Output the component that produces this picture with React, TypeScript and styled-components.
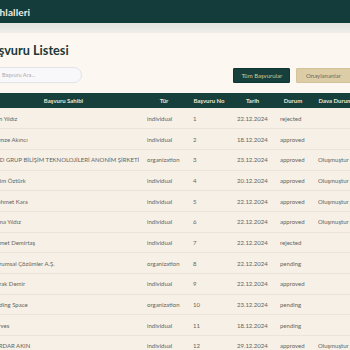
import styled, { createGlobalStyle } from "styled-components";

const GlobalStyle = createGlobalStyle`
  html, body {
    margin: 0;
    padding: 0;
    background: #ecebe7;
    overflow: hidden;
  }
  body {
    font-family: "Lato", "Open Sans", sans-serif;
  }
`;

const Viewport = styled.div`
  width: 350px;
  height: 350px;
  overflow: hidden;
`;

// the page is scrolled a little to the right in the screenshot
const Page = styled.div`
  width: 560px;
  margin-left: -40px;
`;

const TopBar = styled.header`
  height: 23px;
  background: #133c3a;
  display: flex;
  align-items: center;
  padding-left: 15px;
`;

const Brand = styled.h1`
  margin: 0;
  font-size: 10px;
  font-weight: 700;
  color: #f1ede2;
  letter-spacing: 0.1px;
`;

const Band = styled.div`
  height: 10px;
  background: linear-gradient(#e6e4e0, #efeeea);
`;

const Main = styled.main`
  background: #fcf7f0;
  padding: 8px 0 0 25px;
  min-height: 320px;
`;

const Title = styled.h2`
  margin: 0 0 0 -1px;
  height: 18px;
  line-height: 18px;
  font-size: 12.7px;
  font-weight: 700;
  color: #1b3937;
`;

const Toolbar = styled.div`
  display: flex;
  align-items: center;
  justify-content: space-between;
  margin-top: 8px;
  height: 16px;
  width: 428px;
`;

const Search = styled.input`
  box-sizing: border-box;
  width: 97px;
  height: 16px;
  border: 1px solid #e3e3ea;
  border-radius: 8px;
  background: #f8f8fb;
  padding: 0 0 0 16px;
  font-family: inherit;
  font-size: 5.5px;
  color: #555;
  outline: none;
  &::placeholder {
    color: #a9a9b4;
  }
`;

const Filters = styled.div`
  display: flex;
  gap: 6px;
`;

const FilterButton = styled.button<{ $active?: boolean }>`
  height: 15px;
  padding: 0 ${(p) => (p.$active ? 7 : 9)}px;
  border: 1px solid ${(p) => (p.$active ? "#0f3432" : "#d3c39b")};
  border-radius: 1px;
  background: ${(p) => (p.$active ? "#173f3c" : "#dccda6")};
  color: ${(p) => (p.$active ? "#d6c992" : "#6f6a5c")};
  font-family: inherit;
  font-size: 6px;
  cursor: pointer;
`;

const Table = styled.table`
  margin-top: 10px;
  border-collapse: collapse;
  table-layout: fixed;
  width: 455px;
`;

const Head = styled.th<{ $w: number }>`
  box-sizing: border-box;
  width: ${(p) => p.$w}px;
  height: 15px;
  padding: 0 4px 0 8px;
  background: #173f3c;
  color: #ece5cf;
  font-size: 6px;
  font-weight: 700;
  text-align: center;
  white-space: nowrap;
  overflow: hidden;
  &:first-child {
    padding-left: 7px;
  }
`;

const Row = styled.tr`
  height: 20.7px;
  background: #f6f0e6;
  border-bottom: 1px solid #ebe4d8;
`;

const Cell = styled.td`
  padding: 0 4px 0 8px;
  font-size: 6px;
  color: #656561;
  white-space: nowrap;
  overflow: hidden;
  &:first-child {
    padding-left: 7px;
  }
`;

type Item = {
  name: string;
  type: string;
  no: number;
  date: string;
  status: string;
  lawsuit?: string;
};

const items: Item[] = [
  { name: "Can Yıldız", type: "individual", no: 1, date: "22.12.2024", status: "rejected" },
  { name: "Gamze Akıncı", type: "individual", no: 2, date: "18.12.2024", status: "approved" },
  { name: "ARD GRUP BİLİŞİM TEKNOLOJİLERİ ANONİM ŞİRKETİ", type: "organization", no: 3, date: "23.12.2024", status: "approved", lawsuit: "Oluşmuştur" },
  { name: "Selim Öztürk", type: "individual", no: 4, date: "20.12.2024", status: "approved", lawsuit: "Oluşmuştur" },
  { name: "Mehmet Kara", type: "individual", no: 5, date: "22.12.2024", status: "approved", lawsuit: "Oluşmuştur" },
  { name: "Esma Yıldız", type: "individual", no: 6, date: "22.12.2024", status: "approved", lawsuit: "Oluşmuştur" },
  { name: "Ahmet Demirtaş", type: "individual", no: 7, date: "22.12.2024", status: "rejected" },
  { name: "Kurumsal Çözümler A.Ş.", type: "organization", no: 8, date: "22.12.2024", status: "pending" },
  { name: "Burak Demir", type: "individual", no: 9, date: "22.12.2024", status: "approved" },
  { name: "Coding Space", type: "organization", no: 10, date: "23.12.2024", status: "pending" },
  { name: "Serves", type: "individual", no: 11, date: "18.12.2024", status: "pending" },
  { name: "SERDAR AKIN", type: "individual", no: 12, date: "29.12.2024", status: "approved", lawsuit: "Oluşmuştur" },
];

const columns = [
  { label: "Başvuru Sahibi", w: 154 },
  { label: "Tür", w: 46 },
  { label: "Başvuru No", w: 44 },
  { label: "Tarih", w: 43 },
  { label: "Durum", w: 38 },
  { label: "Dava Durumu", w: 50 },
  { label: "İşlemler", w: 80 },
];

export default function App() {
  return (
    <Viewport>
      <GlobalStyle />
      <Page>
        <TopBar>
          <Brand>Telif İhlalleri</Brand>
        </TopBar>
        <Band />
        <Main>
          <Title>Başvuru Listesi</Title>
          <Toolbar>
            <Search placeholder="Başvuru Ara..." />
            <Filters>
              <FilterButton $active>Tüm Başvurular</FilterButton>
              <FilterButton>Onaylananlar</FilterButton>
              <FilterButton>Reddedilenler</FilterButton>
            </Filters>
          </Toolbar>
          <Table>
            <thead>
              <tr>
                {columns.map((c) => (
                  <Head key={c.label} $w={c.w}>
                    {c.label}
                  </Head>
                ))}
              </tr>
            </thead>
            <tbody>
              {items.map((it) => (
                <Row key={it.no}>
                  <Cell>{it.name}</Cell>
                  <Cell>{it.type}</Cell>
                  <Cell>{it.no}</Cell>
                  <Cell>{it.date}</Cell>
                  <Cell>{it.status}</Cell>
                  <Cell>{it.lawsuit ?? ""}</Cell>
                  <Cell />
                </Row>
              ))}
            </tbody>
          </Table>
        </Main>
      </Page>
    </Viewport>
  );
}
